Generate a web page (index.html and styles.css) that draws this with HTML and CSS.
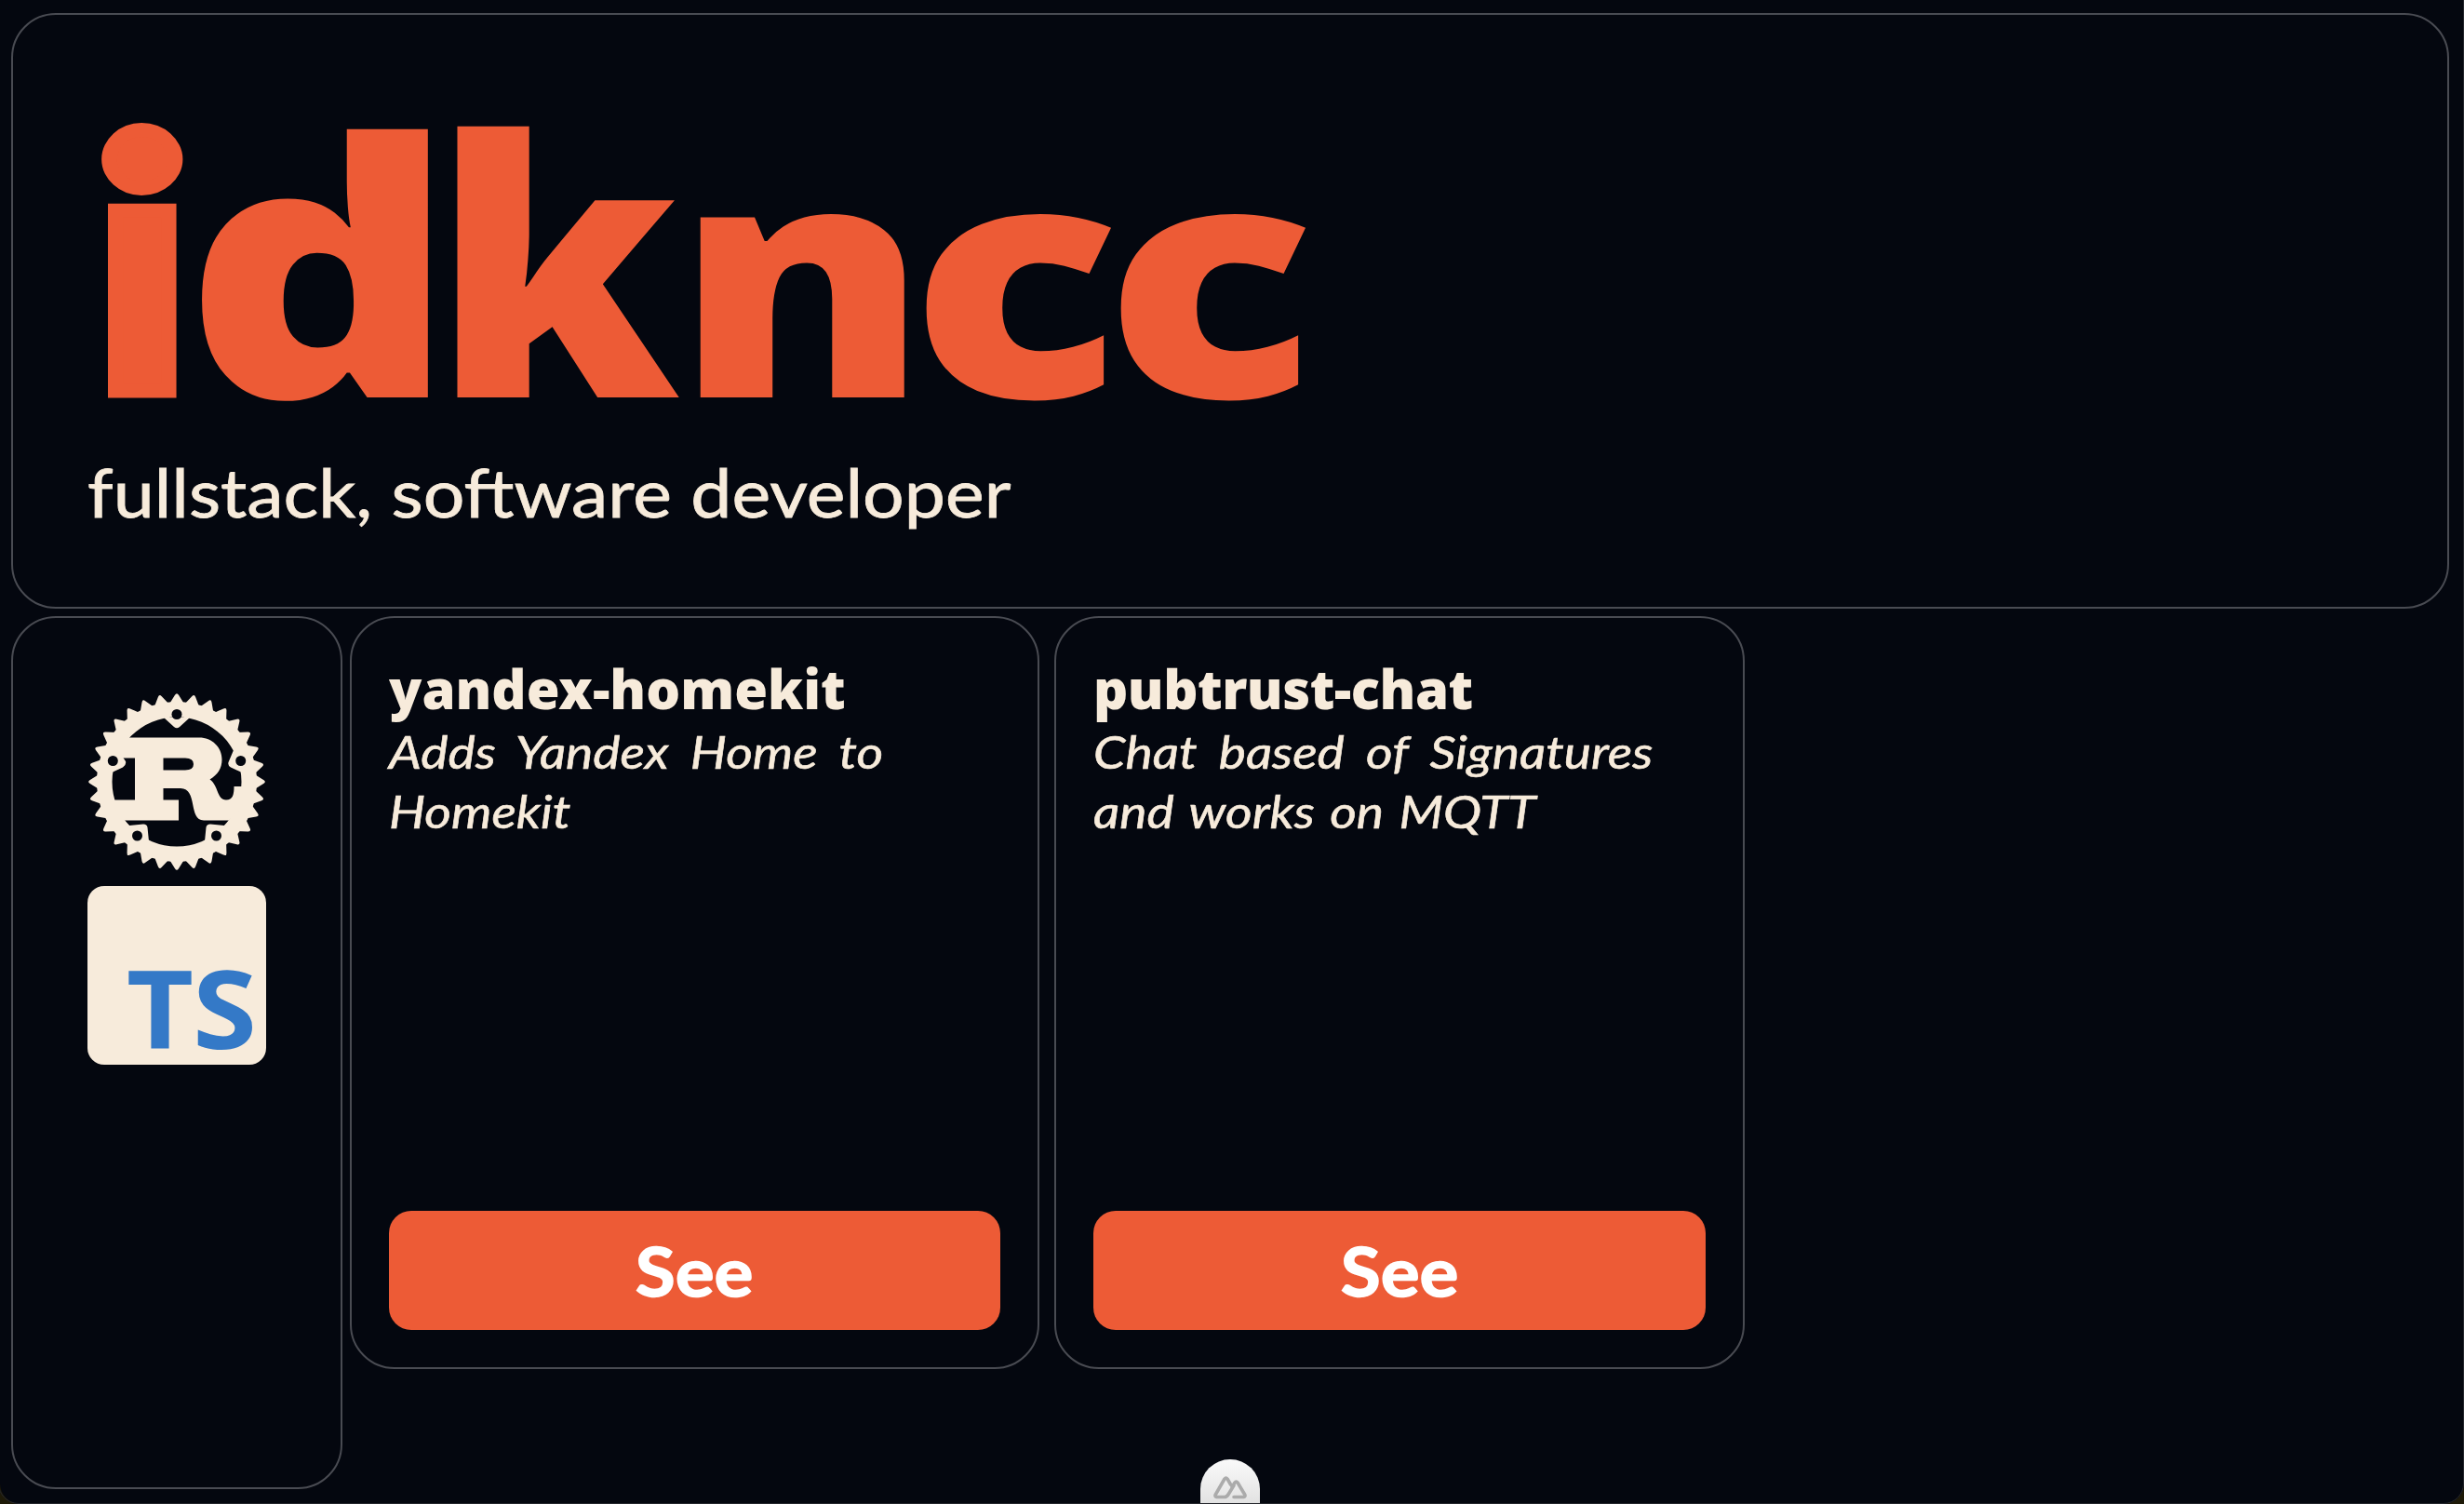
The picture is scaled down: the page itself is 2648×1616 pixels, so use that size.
FILE: index.html
```html
<!DOCTYPE html>
<html lang="en">
<head>
<meta charset="utf-8">
<title>idkncc</title>
<link rel="stylesheet" href="styles.css">
</head>
<body>
<main class="page">
  <header class="panel hero">
    <h1 class="name"><span class="l-i">i</span><span class="l-d">d</span><span class="l-k">k</span><span class="l-n">n</span><span class="l-c">c</span><span class="l-c2">c</span></h1>
    <p class="tagline"><span class="fit">fullstack, software developer</span></p>
  </header>
  <div class="content">
    <aside class="panel stack">
      <svg class="logo" viewBox="0 0 192 192" aria-label="Rust">
        <defs>
          <path id="tooth" d="M87 14 L94 2.800 Q96 -0.500 98 2.800 L105 14Z"/>
          <g id="teeth4"><use href="#tooth"/><use href="#tooth" transform="rotate(11.25 96 96)"/><use href="#tooth" transform="rotate(22.5 96 96)"/><use href="#tooth" transform="rotate(33.75 96 96)"/></g>
          <g id="teeth16"><use href="#teeth4"/><use href="#teeth4" transform="rotate(45 96 96)"/><use href="#teeth4" transform="rotate(90 96 96)"/><use href="#teeth4" transform="rotate(135 96 96)"/></g>
        </defs>
        <g class="cream">
          <use href="#teeth16"/><use href="#teeth16" transform="rotate(180 96 96)"/>
          <path fill-rule="evenodd" d="M96 10a86 86 0 1 0 0 172a86 86 0 1 0 0-172M96 26.500a69.500 69.500 0 1 1 0 139a69.500 69.500 0 1 1 0-139"/>
          <path d="M82 27L93 37Q96 39.500 99 37L110 27ZM157 62L151.500 75Q150.500 78.500 154 80.500L168 87L172 70ZM24 87L38 80.500Q42 78 41 74L37 68L20 68ZM40 138L45 143L60 141.500Q64 141.500 64.500 145L66 160L50 160ZM152 138L147 143L132 141.500Q128 141.500 127.500 145L126 160L142 160Z"/>
          <path fill-rule="evenodd" d="M41 48.500H120C134 48.500 144.500 59 144.500 72C144.500 82 140 88 131.500 93.500C141 100 139 115.500 149 115.500C156 115.500 157.500 110 157.500 101H167L166 124L152 137.500H125C108 137.500 119 103 100 103H81.500V115.500H98V137.500H36L24 115.500H51V70.500H30V55ZM81.500 70.500V83.500H105Q114 83.500 114 77Q114 70.500 105 70.500Z"/>
        </g>
        <g class="holes"><circle cx="96" cy="23.500" r="5.500"/><circle cx="27.300" cy="73.500" r="5.500"/><circle cx="164.700" cy="73.500" r="5.500"/><circle cx="53.500" cy="154" r="5.500"/><circle cx="138.500" cy="154" r="5.500"/></g>
      </svg>
      <svg class="logo" viewBox="0 0 192 192" aria-label="TypeScript">
        <rect class="cream" width="192" height="192" rx="18"/>
        <text class="ts" y="175" x="42" textLength="72" lengthAdjust="spacingAndGlyphs">T</text>
        <text class="ts" y="175" x="113" textLength="69" lengthAdjust="spacingAndGlyphs">S</text>
      </svg>
    </aside>
    <article class="panel project">
      <h2 class="title"><span class="fit">yandex-homekit</span></h2>
      <p class="about"><span class="fit">Adds Yandex Home to<br>Homekit</span></p>
      <button class="see"><span class="fit">See</span></button>
    </article>
    <article class="panel project wide">
      <h2 class="title"><span class="fit">pubtrust-chat</span></h2>
      <p class="about"><span class="fit">Chat based of Signatures<br><span class="tight">and works on MQTT</span></span></p>
      <button class="see"><span class="fit">See</span></button>
    </article>
  </div>
</main>
<div class="devtools">
  <svg viewBox="0 0 36 24" class="peaks"><path d="M22 10L16.500 19Q14.500 22.500 12 22.500H3.500Q1 22 2.500 19.500L12 3Q13.500 1 15 3L18.500 9M22 22.500H32.500Q35 22 33.500 19.500L26 7Q24.500 5 23 7L20 12"/></svg>
</div>
<div class="edge"></div>
</body>
</html>
```
FILE: styles.css
```css
* { box-sizing: border-box; margin: 0; padding: 0; }
html { background: #1e1a08; }
body {
  height: 1616px;
  overflow: hidden;
  font-family: Lato, sans-serif;
  color: #f7ebdb;
}
.page {
  height: 1616px;
  padding: 14px 16px 16px 12px;
  display: flex;
  flex-direction: column;
  gap: 8px;
  background: #04070f;
  border-radius: 0 0 22px 22px;
}
.panel { border: 2px solid #494b52; border-radius: 48px; }
.hero { height: 640px; padding: 80px; }
.fit { display: inline-block; transform-origin: 0 0; white-space: nowrap; }
.name {
  height: 384px;
  font-family: "Noto Sans", sans-serif;
  font-size: 372px;
  line-height: 370px;
  font-weight: 900;
  color: #ed5b36;
}
.name span { display: inline-block; transform-origin: 0 328px; }
.name .l-i {
  width: 120px;
  font-family: Lato, sans-serif;
  font-size: 376px;
  line-height: 300px;
  -webkit-text-stroke: 15px #ed5b36;
  transform-origin: 0 0;
  transform: translate(5px, -5px) scaleX(1.1);
}
.l-d { transform: translate(-16px, 2px) scale(1.22, 1.02); }
.l-k { transform: translate(12px, 2px) scale(1.08, 1.03); }
.l-n { transform: translate(28px, 2px) scale(1.09, 0.94); }
.l-c { transform: translate(30px, 2px) scale(1.13, 0.94); }
.l-c2 { transform: translate(39px, 2px) scale(1.13, 0.94); }
.tagline { font-size: 72px; line-height: 96px; -webkit-text-stroke: 0.8px #f7ebdb; }
.tagline .fit { transform: scaleX(1.096); }
.content { flex: 1; display: flex; align-items: flex-start; gap: 16px; }
.stack {
  width: 356px;
  height: 938px;
  margin-right: -8px;
  padding: 80px;
  display: flex;
  flex-direction: column;
  gap: 16px;
}
.logo { display: block; width: 192px; height: 192px; overflow: visible; }
.cream { fill: #f7ebdb; }
.holes { fill: #04070f; }
.ts { font: 700 117px "Noto Sans", sans-serif; fill: #3479c7; }
.project {
  width: 741px;
  height: 809px;
  padding: 40px;
  display: flex;
  flex-direction: column;
}
.wide { width: 742px; }
.title { font: 900 58px/72px "Noto Sans", sans-serif; }
.wide .title { letter-spacing: -0.5px; }
.about { font-size: 48px; line-height: 64px; font-style: italic; -webkit-text-stroke: 0.6px #f7ebdb; }
.about .fit { word-spacing: 9px; transform: scaleX(1.15); }
.about .tight { word-spacing: 3px; }
.see {
  height: 128px;
  margin-top: auto;
  border: 0;
  border-radius: 24px;
  background: #ed5b36;
  color: #fff;
  font: 700 72px Lato, sans-serif;
  -webkit-text-stroke: 1.5px #fff;
}
.see .fit { transform-origin: 50% 0; transform: scaleX(1.09); }
.devtools {
  position: absolute;
  left: 1290px;
  top: 1568px;
  width: 64px;
  height: 48px;
  padding: 17px 14px;
  border-radius: 32px 32px 0 0;
  background: linear-gradient(#fafafa, #e2e2e2);
}
.peaks { display: block; width: 36px; height: 26px; fill: none; stroke: #ababab; stroke-width: 3.6; stroke-linejoin: round; stroke-linecap: round; }
.edge {
  position: absolute;
  inset: -2px 0 0 -2px;
  border: 1px solid #25272d;
  border-radius: 0 0 22px 22px;
}
```
